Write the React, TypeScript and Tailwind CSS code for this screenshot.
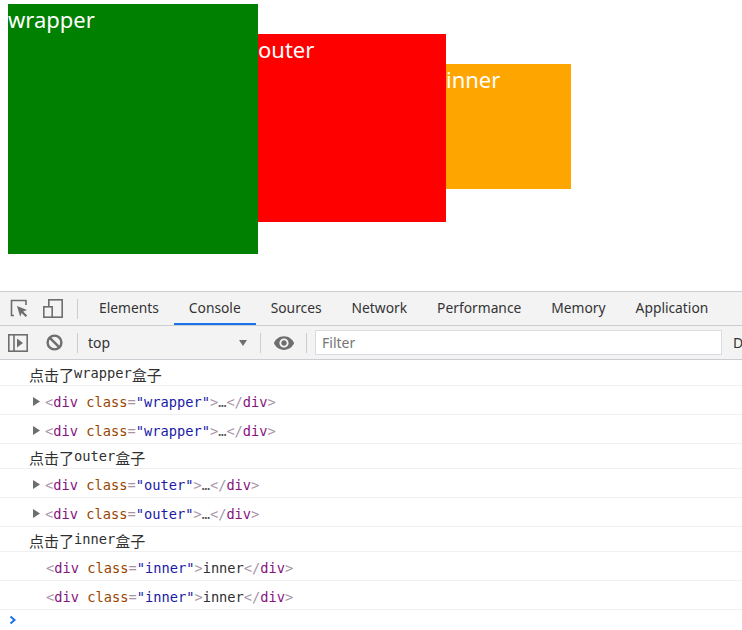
import React from "react";

const mono = { fontFamily: "'DejaVu Sans Mono', 'Noto Sans CJK SC', monospace" };

function Cjk({ children }: { children: React.ReactNode }) {
  return <span className="text-[15px]" style={{ fontFamily: "'Noto Sans CJK SC', sans-serif" }}>{children}</span>;
}

function TextRow({ name }: { name: string }) {
  return (
    <div className="h-[25px] border-b border-[#f0f0f0] pl-[29px] pt-[2px] flex items-center text-[#303030] text-[13.7px] leading-none" style={mono}>
      <Cjk>点击了</Cjk>
      <span>{name}</span>
      <Cjk>盒子</Cjk>
    </div>
  );
}

function ElemRow({ name, inner }: { name: string; inner?: boolean }) {
  return (
    <div className="h-[29px] border-b border-[#f0f0f0] pt-[6px] flex items-center text-[13.7px] leading-none" style={mono}>
      <div className="w-[45px] shrink-0 flex justify-end pr-[5px]">
        {!inner && (
          <svg width="7" height="9" viewBox="0 0 7 9" className="-mt-[3px]">
            <polygon points="0,0 7,4.5 0,9" fill="#6e6e6e" />
          </svg>
        )}
      </div>
      <span className={inner ? "ml-[1px]" : ""}>
        <span className="text-[#a894a6]">&lt;</span>
        <span className="text-[#881280]">div</span>
        <span> </span>
        <span className="text-[#994500]">class</span>
        <span className="text-[#a894a6]">=</span>
        <span className="text-[#1a1aa6]">"{name}"</span>
        <span className="text-[#a894a6]">&gt;</span>
        {inner ? <span className="text-[#303030]">inner</span> : <span className="text-[#555]">…</span>}
        <span className="text-[#a894a6]">&lt;/</span>
        <span className="text-[#881280]">div</span>
        <span className="text-[#a894a6]">&gt;</span>
      </span>
    </div>
  );
}

function Sep() {
  return <div className="w-px h-[20px] bg-[#cacdd1]" />;
}

export default function App() {
  const tabs = ["Elements", "Console", "Sources", "Network", "Performance", "Memory", "Application"];
  return (
    <div className="w-[742px] h-[630px] overflow-hidden bg-white" style={{ fontFamily: "'Noto Sans', sans-serif" }}>
      {/* demo boxes */}
      <div className="h-[291px] flex items-start pl-[8px] pt-[4px] text-white text-[22px] leading-[31px]">
        <div className="w-[250px] h-[250px] bg-[#008000] shrink-0">wrapper</div>
        <div className="w-[188px] h-[188px] bg-[#ff0000] mt-[30px] shrink-0">outer</div>
        <div className="w-[125px] h-[125px] bg-[#ffa500] mt-[60px] shrink-0">inner</div>
      </div>

      {/* devtools */}
      <div className="border-t border-[#cacdd1] bg-[#f3f3f3]">
        {/* tab bar */}
        <div className="h-[34px] border-b border-[#cacdd1] flex items-stretch text-[13.8px] text-[#333] whitespace-nowrap">
          <div className="flex items-center pl-[10px] shrink-0">
            <svg width="18" height="19" viewBox="0 0 18 19">
              <path d="M4 16.5 H1.5 V1.5 H16 V6" fill="none" stroke="#6e6e6e" strokeWidth="1.6" />
              <polygon points="7,7 17,11 13.2,12.4 17.2,16.4 15.6,18 11.6,14 10.2,17.8" fill="#6e6e6e" />
            </svg>
          </div>
          <div className="flex items-center ml-[15px] shrink-0">
            <svg width="20" height="19" viewBox="0 0 20 19">
              <rect x="5.8" y="0.8" width="13.4" height="17.4" fill="none" stroke="#6e6e6e" strokeWidth="1.6" />
              <rect x="0.8" y="7.8" width="8.4" height="10.4" fill="#f3f3f3" stroke="#6e6e6e" strokeWidth="1.6" />
            </svg>
          </div>
          <div className="flex items-center ml-[14px] shrink-0"><Sep /></div>
          <div className="flex ml-[6px] shrink-0">
            {tabs.map((t) => (
              <div
                key={t}
                className={
                  "px-[15px] flex items-center border-b-2 " +
                  (t === "Console" ? "border-[#1a73e8] text-[#333]" : "border-transparent text-[#333]")
                }
              >
                <span className="mt-[2px]">{t}</span>
              </div>
            ))}
          </div>
        </div>

        {/* console toolbar */}
        <div className="h-[34px] border-b border-[#cacdd1] flex items-center text-[14px] text-[#333] whitespace-nowrap">
          <div className="ml-[8px] shrink-0">
            <svg width="20" height="18" viewBox="0 0 20 18">
              <rect x="0.8" y="0.8" width="18.4" height="16.4" fill="none" stroke="#6e6e6e" strokeWidth="1.6" />
              <line x1="6" y1="1" x2="6" y2="17" stroke="#6e6e6e" strokeWidth="1.6" />
              <polygon points="9,4.5 15,9 9,13.5" fill="#6e6e6e" />
            </svg>
          </div>
          <div className="ml-[18px] shrink-0">
            <svg width="17" height="17" viewBox="0 0 17 17">
              <circle cx="8.5" cy="8.5" r="6.9" fill="none" stroke="#6e6e6e" strokeWidth="2.4" />
              <line x1="3.8" y1="3.8" x2="13.2" y2="13.2" stroke="#6e6e6e" strokeWidth="2.4" />
            </svg>
          </div>
          <div className="ml-[14px] shrink-0"><Sep /></div>
          <div className="ml-[10px] w-[160px] shrink-0 flex items-center justify-between">
            <span>top</span>
            <svg width="8" height="6" viewBox="0 0 8 6" className="mr-[1px]">
              <polygon points="0,0 8,0 4,6" fill="#6e6e6e" />
            </svg>
          </div>
          <div className="ml-[12px] shrink-0"><Sep /></div>
          <div className="ml-[12px] shrink-0">
            <svg width="22" height="22" viewBox="0 0 24 24">
              <path
                d="M12 4.5C7 4.5 2.730 7.61 1 12c1.73 4.39 6 7.5 11 7.5s9.27-3.11 11-7.5c-1.73-4.39-6-7.5-11-7.5zM12 17c-2.76 0-5-2.24-5-5s2.24-5 5-5 5 2.24 5 5-2.24 5-5 5zm0-8c-1.66 0-3 1.34-3 3s1.34 3 3 3 3-1.34 3-3-1.34-3-3-3z"
                fill="#6e6e6e"
              />
            </svg>
          </div>
          <div className="ml-[11px] shrink-0"><Sep /></div>
          <div className="ml-[8px] w-[407px] h-[25px] shrink-0 bg-white border border-[#dadce0] flex items-center pl-[6px] text-[#757575]">
            Filter
          </div>
          <div className="ml-[11px] shrink-0 text-[#333]">Default levels</div>
        </div>
      </div>

      {/* console messages */}
      <div className="pt-[1px]">
        <TextRow name="wrapper" />
        <ElemRow name="wrapper" />
        <ElemRow name="wrapper" />
        <TextRow name="outer" />
        <ElemRow name="outer" />
        <ElemRow name="outer" />
        <TextRow name="inner" />
        <ElemRow name="inner" inner />
        <ElemRow name="inner" inner />
        <div className="h-[20px] flex items-center pl-[9px]">
          <svg width="8" height="10" viewBox="0 0 8 10">
            <polyline points="1.5,1.5 5.5,5 1.5,8.5" fill="none" stroke="#1a73e8" strokeWidth="2" />
          </svg>
        </div>
      </div>
    </div>
  );
}
